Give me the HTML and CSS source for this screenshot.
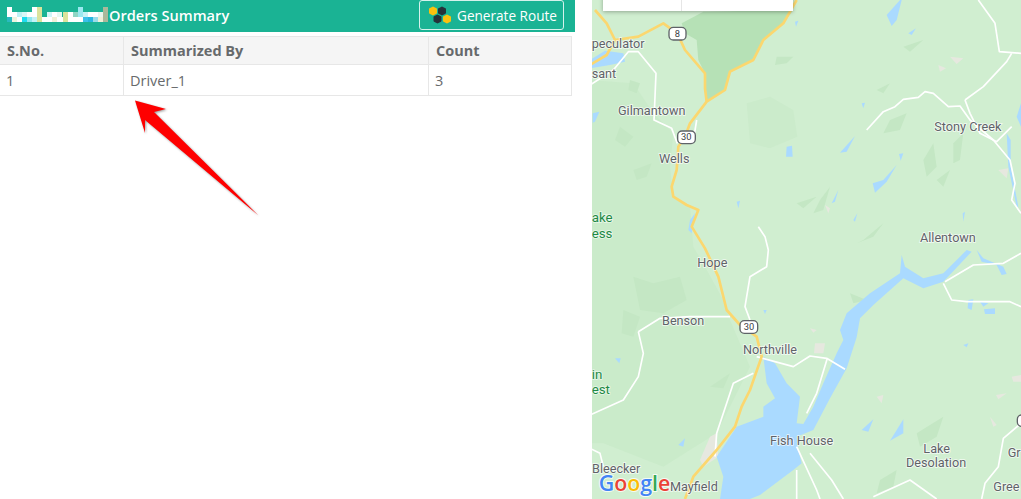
FILE: index.html
```html
<!DOCTYPE html>
<html lang="en">
<head>
    <meta charset="UTF-8">
    <meta name="viewport" content="width=device-width, initial-scale=1.0">
    <title>Orders Summary</title>
    <link rel="stylesheet" href="styles.css">
</head>
<body>
    <div class="page">
        <div class="left-panel">
            <div class="panel-header">
                <div class="panel-title">
                    <svg class="blurred-name" width="102" height="16" viewBox="7 8 102 16">
                        <rect x="7" y="8" width="5" height="10" fill="#fff"/>
                        <rect x="12" y="13" width="5" height="5" fill="#fff"/>
                        <rect x="17" y="13" width="5" height="5" fill="#bdf1f3"/>
                        <rect x="22" y="13" width="5" height="5" fill="#d9f7f7"/>
                        <rect x="27" y="13" width="5" height="5" fill="#fff"/>
                        <rect x="32" y="8" width="5" height="10" fill="#fff"/>
                        <rect x="37" y="8" width="5" height="10" fill="#dbe39c"/>
                        <rect x="47" y="13" width="5" height="5" fill="#d2f5f7"/>
                        <rect x="52" y="13" width="5" height="5" fill="#fff"/>
                        <rect x="57" y="13" width="5" height="5" fill="#e6f8f0"/>
                        <rect x="63" y="13" width="5" height="5" fill="#dbe39c"/>
                        <rect x="68" y="13" width="5" height="5" fill="#fff"/>
                        <rect x="73" y="13" width="5" height="5" fill="#8fd6c4"/>
                        <rect x="78" y="8" width="5" height="10" fill="#9be8f0"/>
                        <rect x="83" y="13" width="5" height="5" fill="#c8f2f6"/>
                        <rect x="88" y="13" width="5" height="5" fill="#fff"/>
                        <rect x="93" y="13" width="5" height="5" fill="#fff"/>
                        <rect x="98" y="13" width="5" height="5" fill="#e9f6ee"/>
                        <rect x="103" y="8" width="5" height="15" fill="#a9b89a"/>
                        <rect x="7" y="18" width="5" height="5" fill="#2bb9c0"/>
                        <rect x="12" y="18" width="5" height="5" fill="#edf4de"/>
                        <rect x="17" y="18" width="5" height="5" fill="#fff"/>
                        <rect x="22" y="18" width="5" height="5" fill="#1fdcef"/>
                        <rect x="27" y="18" width="5" height="5" fill="#8fe8f0"/>
                        <rect x="32" y="18" width="5" height="5" fill="#c5f3f7"/>
                        <rect x="37" y="18" width="5" height="5" fill="#dbe39c"/>
                        <rect x="42" y="18" width="10" height="5" fill="#fff"/>
                        <rect x="52" y="18" width="5" height="5" fill="#f0f0d8"/>
                        <rect x="57" y="18" width="6" height="5" fill="#fff"/>
                        <rect x="63" y="18" width="5" height="5" fill="#dbe39c"/>
                        <rect x="68" y="18" width="15" height="5" fill="#fff"/>
                        <rect x="83" y="18" width="5" height="5" fill="#3cc0ea"/>
                        <rect x="88" y="18" width="5" height="5" fill="#29b6e0"/>
                        <rect x="93" y="18" width="5" height="5" fill="#9bdce8"/>
                        <rect x="98" y="18" width="5" height="5" fill="#f0f0d8"/>
                    </svg>
                    <span>Orders Summary</span>
                </div>
                <button class="route-button">
                    <svg class="route-icon" width="24" height="20" viewBox="0 0 24 20">
                        <polygon class="hex-yellow" points="6,2.5 9,4.2 9,7.8 6,9.5 3,7.8 3,4.2"/>
                        <polygon class="hex-dark" points="15,2.5 18,4.2 18,7.8 15,9.5 12,7.8 12,4.2"/>
                        <polygon class="hex-dark" points="10.5,10.5 13.5,12.2 13.5,15.8 10.5,17.5 7.5,15.8 7.5,12.2"/>
                        <polygon class="hex-yellow" points="20,10.5 23,12.2 23,15.8 20,17.5 17,15.8 17,12.2"/>
                    </svg>
                    Generate Route
                </button>
            </div>

            <table class="summary-table">
                <thead>
                    <tr>
                        <th class="col-sno">S.No.</th>
                        <th class="col-name">Summarized By</th>
                        <th>Count</th>
                    </tr>
                </thead>
                <tbody>
                    <tr>
                        <td class="cell-sno">1</td>
                        <td>Driver_1</td>
                        <td>3</td>
                    </tr>
                </tbody>
            </table>

            <!-- annotation arrow on top of the screenshot -->
            <svg class="red-arrow" width="140" height="125" viewBox="130 96 140 125">
                <polygon points="135,100.5 166,109 154,112 258.5,215.5 145,120 145,133"/>
            </svg>
        </div>

        <div class="map-panel">
            <!-- coordinates are 3x, the map is 429x499 on screen -->
            <svg class="map" width="429" height="499" viewBox="6 0 1287 1497">
                <rect class="land" x="0" y="0" width="1293" height="1497"/>

                <polygon class="patch" points="0,240 130,250 190,340 250,400 240,500 250,590 300,620 310,740 345,800 400,900 420,960 480,1100 380,1300 220,1400 40,1330 0,1330"/>
                <polygon class="forest" points="275,70 340,35 610,30 580,70 520,120 490,180 420,215 405,270 350,305 345,220 325,180 320,120 285,100"/>
                <polygon class="patch-soft" points="470,310 540,290 610,330 622,410 540,445 480,430"/>

                <g class="patch-dark">
                    <polygon points="90,380 130,410 105,440 75,420"/>
                    <polygon points="130,510 185,490 170,530 140,540"/>
                    <polygon points="120,240 150,250 140,280 115,270"/>
                    <polygon points="130,830 190,850 270,830 290,900 220,940 150,930"/>
                    <polygon points="100,930 150,950 130,1010 95,1000"/>
                    <polygon points="900,360 950,340 930,390 880,400"/>
                    <polygon points="1000,480 1030,430 1040,500 1010,530"/>
                    <polygon points="690,600 720,560 700,630 670,640"/>
                    <polygon points="820,720 880,670 850,710 800,730"/>
                    <polygon points="1090,430 1120,400 1110,480 1090,490"/>
                    <polygon points="980,1300 1060,1250 1040,1310 990,1340"/>
                    <polygon points="870,1440 920,1410 910,1460 860,1480"/>
                    <polygon points="560,170 610,170 590,190 555,195"/>
                    <polygon points="940,140 1000,120 960,155"/>
                    <polygon points="860,270 900,250 880,280"/>
                    <polygon points="620,610 680,590 640,625"/>
                    <polygon points="1040,540 1080,510 1060,560"/>
                    <polygon points="360,1160 420,1120 400,1165"/>
                    <polygon points="780,880 830,900 790,910"/>
                </g>
                <g class="rock">
                    <polygon points="1080,170 1120,175 1100,192"/>
                    <polygon points="1045,195 1068,205 1050,215"/>
                    <polygon points="1225,510 1255,505 1250,535"/>
                    <polygon points="705,615 720,625 715,640"/>
                    <polygon points="675,1030 705,1030 700,1060 672,1060"/>
                    <polygon points="660,985 680,990 670,998"/>
                    <polygon points="860,1190 880,1185 875,1210"/>
                    <polygon points="1265,1130 1293,1125 1293,1145 1270,1145"/>
                    <polygon points="1218,1185 1250,1180 1225,1198"/>
                    <polygon points="1200,1250 1220,1275 1210,1280"/>
                    <polygon points="360,1310 380,1300 385,1370 340,1400 330,1380"/>
                </g>

                <g class="water">
                    <polygon points="935,15 945,50 1000,85 1060,70 1110,20 1130,0 1145,5 1060,95 1000,115 940,85 850,165 810,205 800,262 770,355 720,445 670,540 620,560 625,600 635,640 610,660 510,735 480,747 390,747 400,680 380,620 440,530 520,500 520,470 555,445 530,400 520,320 555,340 590,400 630,440 620,520 640,522 670,470 700,400 740,310 760,270 750,240 770,190 840,130 930,70" transform="translate(0,750)"/>
                    <path d="M1160 750 L1180 775 L1240 800 L1250 822 L1235 825 L1220 795 L1175 785 Z"/>
                    <path d="M0 180 L45 152 L100 160 L105 185 L60 195 L0 205 Z"/>
                    <path d="M890 45 L930 0 L935 0 L920 60 L905 78 Z"/>
                    <path d="M955 100 L978 85 L965 105 Z"/>
                    <path d="M590 440 L606 437 L608 470 L588 470 Z"/>
                    <path d="M750 458 L795 408 L770 455 Z"/>
                    <path d="M848 550 L880 540 L920 495 L890 545 L855 578 Z"/>
                    <path d="M927 462 L940 460 L932 482 Z"/>
                    <path d="M725 610 L745 570 L735 605 Z"/>
                    <path d="M790 660 L802 640 L795 665 Z"/>
                    <path d="M815 310 L825 308 L820 325 Z"/>
                    <path d="M615 65 L625 62 L618 80 Z"/>
                    <path d="M8 340 L28 335 L15 365 L8 368 Z"/>
                    <path d="M440 605 L450 602 L445 625 Z"/>
                    <path d="M1118 640 L1125 635 L1120 665 Z"/>
                    <path d="M1135 900 L1150 898 L1145 930 L1133 925 Z"/>
                    <path d="M1170 905 L1195 910 L1180 920 Z"/>
                    <path d="M1182 928 L1215 925 L1215 942 L1185 942 Z"/>
                    <path d="M815 1290 L850 1258 L835 1295 Z"/>
                    <path d="M900 1322 L940 1258 L940 1300 Z"/>
                    <path d="M265 1335 L285 1315 L280 1340 Z"/>
                    <path d="M75 1075 L92 1075 L88 1090 Z"/>
                    <path d="M1120 1035 L1135 1030 L1130 1042 Z"/>
                    <path d="M520 930 L530 930 L525 942 Z"/>
                    <path d="M1250 400 L1262 420 L1262 500 L1285 620 L1280 620 L1255 500 Z"/>
                    <path d="M1280 350 L1293 310 L1293 380 Z"/>
                    <path d="M300 660 L315 640 L305 700 L295 690 Z"/>
                </g>

                <g class="road">
                    <path d="M1165 0 L1215 70 L1228 155 L1293 160"/>
                    <path d="M830 390 L880 335 L915 320 L940 298 L985 292 L1005 275 L1030 280 L1075 320 L1110 318 L1140 360 L1210 420 L1260 480 L1275 550 L1265 600 L1293 640"/>
                    <path d="M1125 300 L1180 260 L1250 185 L1265 160"/>
                    <path d="M1125 300 L1140 340 L1170 400 L1220 425 L1265 380"/>
                    <path d="M0 255 L70 210 L115 155 L145 155 L198 220 L192 360 L245 385 L262 430"/>
                    <path d="M320 360 L312 410"/>
                    <path d="M505 680 L525 710 L535 750 L530 800 L480 830 L465 920 L480 960"/>
                    <path d="M145 995 L210 955 L300 950 L420 950"/>
                    <path d="M145 995 L160 1060 L145 1130 L100 1200 L0 1245"/>
                    <path d="M500 1070 L610 1100 L660 1068 L710 1075 L765 1108"/>
                    <path d="M712 1075 L680 1180 L650 1240"/>
                    <path d="M490 1120 L430 1150 L400 1240 L380 1300 L375 1370"/>
                    <path d="M1060 850 L1085 900 L1130 905 L1260 905 L1293 920"/>
                    <path d="M1065 845 L1150 795 L1240 790 L1293 760"/>
                    <path d="M620 1340 L680 1470 L690 1497"/>
                    <path d="M660 1360 L725 1440 L760 1497"/>
                    <path d="M620 1410 L620 1497"/>
                    <path d="M0 1345 L30 1360 L40 1400"/>
                    <path d="M1293 1270 L1240 1315 L1225 1400 L1185 1450 L1175 1497"/>
                    <path d="M1040 1497 L960 1440 L850 1490"/>
                </g>

                <g class="highway">
                    <path d="M620 0 L580 70 L520 120 L490 180 L420 215 L405 270 L350 305 L300 370 L285 410 L265 440 L260 510 L245 560 L250 590 L290 615 L325 630 L305 680 L345 745 L385 830 L410 930 L450 975 L500 1010 L515 1070 L480 1170 L455 1220 L435 1280 L380 1350 L310 1430 L285 1497"/>
                    <path d="M15 30 L50 70 L75 120 L50 165 L0 195"/>
                    <path d="M75 120 L145 110 L220 70 L262 100 L285 150 L345 220 L345 265 L350 305"/>
                </g>

                <g class="shield">
                    <rect x="237" y="82" width="51" height="38" rx="13"/>
                    <rect x="263" y="393" width="53" height="38" rx="13"/>
                    <rect x="450" y="962" width="53" height="38" rx="13"/>
                    <rect x="1282" y="1245" width="40" height="34" rx="13"/>
                </g>
                <g class="shield-text">
                    <text x="262" y="110">8</text>
                    <text x="289" y="421">30</text>
                    <text x="477" y="990">30</text>
                </g>

                <g class="place">
                    <text x="5" y="145">peculator</text>
                    <text x="5" y="234">sant</text>
                    <text x="84" y="346">Gilmantown</text>
                    <text x="207" y="489">Wells</text>
                    <text x="1033" y="393">Stony Creek</text>
                    <text x="990" y="727">Allentown</text>
                    <text x="322" y="800">Hope</text>
                    <text x="216" y="975">Benson</text>
                    <text x="459" y="1063">Northville</text>
                    <text x="540" y="1336">Fish House</text>
                    <text x="1000" y="1360">Lake</text>
                    <text x="948" y="1400">Desolation</text>
                    <text x="6" y="1419">Bleecker</text>
                    <text x="240" y="1472">Mayfield</text>
                    <text x="1253" y="1372">Gr</text>
                    <text x="1210" y="1474">Gree</text>
                </g>
                <g class="park">
                    <text x="5" y="667">ake</text>
                    <text x="5" y="715">ess</text>
                    <text x="5" y="1136">in</text>
                    <text x="5" y="1183">est</text>
                </g>

                <text class="google" x="26" y="1472"><tspan class="g-blue">G</tspan><tspan class="g-red">o</tspan><tspan class="g-yellow">o</tspan><tspan class="g-blue">g</tspan><tspan class="g-green">l</tspan><tspan class="g-red">e</tspan></text>
            </svg>

            <div class="map-control">
                <div class="map-tab-left"></div>
                <div class="map-tab-right"></div>
            </div>
        </div>
    </div>
</body>
</html>
```

FILE: styles.css
```css
html, body {
    margin: 0;
    padding: 0;
    background-color: #fff;
}

body {
    font-family: "Open Sans", Arial, sans-serif;
    font-size: 14.5px;
    color: #676a6c;
}

.page {
    display: flex;
    width: 1021px;
    height: 499px;
    overflow: hidden;
}

.left-panel {
    position: relative;
    width: 575px;
    margin-right: 17px;
}

.panel-header {
    display: flex;
    align-items: flex-start;
    justify-content: space-between;
    height: 32px;
    padding-right: 11px;
    background-color: #1ab394;
    box-sizing: border-box;
}

.panel-title {
    display: flex;
    align-items: center;
    height: 30px;
    padding-left: 7px;
    color: #fff;
    font-size: 14.6px;
    font-weight: 600;
}

.blurred-name {
    display: block;
}

.route-button {
    display: flex;
    align-items: center;
    gap: 6px;
    width: 145px;
    height: 30px;
    padding: 0 0 0 7px;
    border: 1px solid #d5f2ec;
    border-radius: 3px;
    background-color: #1ab394;
    color: #fff;
    font-family: inherit;
    font-size: 13.6px;
    box-sizing: border-box;
}

.hex-yellow {
    fill: #fcc10f;
    stroke: #fcc10f;
    stroke-width: 2;
    stroke-linejoin: round;
}

.hex-dark {
    fill: #26323a;
    stroke: #26323a;
    stroke-width: 2;
    stroke-linejoin: round;
}

.summary-table {
    width: 572px;
    margin-top: 4px;
    border-collapse: collapse;
    table-layout: fixed;
}

.summary-table th,
.summary-table td {
    border: 1px solid #e7e7e7;
    text-align: left;
}

.summary-table th {
    height: 27px;
    padding: 0 7px;
    background-color: #f5f5f5;
    font-weight: 700;
}

.summary-table td {
    height: 30px;
    padding: 0 6px;
}

.summary-table th.col-sno {
    width: 109px;
    border-left: none;
}

.summary-table td.cell-sno {
    border-left: none;
}

.col-name {
    width: 290px;
}

.red-arrow {
    position: absolute;
    left: 130px;
    top: 96px;
    overflow: visible;
    filter: drop-shadow(1px 1px 1px rgba(0, 0, 0, 0.4));
}

.red-arrow polygon {
    fill: #fe0000;
}

.map-panel {
    position: relative;
    width: 429px;
    height: 499px;
    overflow: hidden;
}

.map {
    display: block;
    font-family: Roboto, Arial, sans-serif;
}

.land { fill: #d0eed0; }
.forest { fill: #b6e1b6; }
.patch-soft { fill: #cbebcb; }
.patch { fill: #caebca; }
.patch-dark { fill: #c4e7c4; }
.rock { fill: #e6e8df; }
.water { fill: #aadaff; }

.road path {
    fill: none;
    stroke: #fff;
    stroke-width: 5;
    stroke-linejoin: round;
}

.highway path {
    fill: none;
    stroke: #fbd76f;
    stroke-width: 8;
    stroke-linejoin: round;
}

.shield rect {
    fill: #fff;
    stroke: #5f6368;
    stroke-width: 4;
}

.shield-text text {
    fill: #3c4043;
    font-size: 28px;
    text-anchor: middle;
}

.place text {
    fill: #5f6368;
    font-size: 38px;
    stroke: #fff;
    stroke-width: 5;
    stroke-opacity: 0.75;
    paint-order: stroke;
}

.park text {
    fill: #1e8a46;
    font-size: 40px;
    stroke: #fff;
    stroke-width: 5;
    stroke-opacity: 0.6;
    paint-order: stroke;
}

.google {
    font-family: "Open Sans", Arial, sans-serif;
    font-size: 64px;
    font-weight: 600;
    stroke: #fff;
    stroke-width: 6;
    stroke-opacity: 0.8;
    paint-order: stroke;
}

.g-blue { fill: #4285f4; }
.g-red { fill: #ea4335; }
.g-yellow { fill: #fbbc05; }
.g-green { fill: #34a853; }

.map-control {
    position: absolute;
    top: -20px;
    left: 11px;
    display: flex;
    width: 190px;
    height: 31px;
    background-color: #fff;
    box-shadow: 0 1px 4px rgba(0, 0, 0, 0.3);
}

.map-tab-left {
    width: 78px;
    border-right: 1px solid #e6e6e6;
}

.map-tab-right {
    flex: 1;
}
```
